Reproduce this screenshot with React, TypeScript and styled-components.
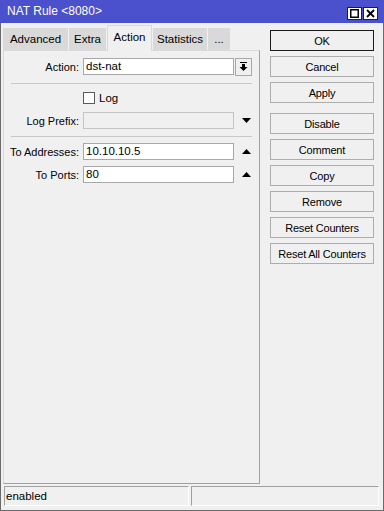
import React from 'react';
import styled, { createGlobalStyle } from 'styled-components';

const GlobalStyle = createGlobalStyle`
  html, body {
    margin: 0;
    padding: 0;
    background: #f0f0f0;
  }
  body {
    font-family: 'Liberation Sans', Arial, sans-serif;
    font-size: 11px;
    color: #000;
  }
  * {
    box-sizing: border-box;
  }
`;

const Window = styled.div`
  width: 384px;
  height: 511px;
  display: flex;
  flex-direction: column;
  background: #f0f0f0;
`;

const TitleBar = styled.div`
  height: 23px;
  flex: none;
  background: #4b50cc;
  display: flex;
  align-items: center;
  padding: 0 6px 0 7px;
`;

const Title = styled.div`
  flex: 1;
  color: #fff;
  font-size: 12px;
  line-height: 23px;
`;

const TitleButtons = styled.div`
  display: flex;
  gap: 1px;
  margin-top: 3px;
`;

const TitleButton = styled.div`
  width: 15px;
  height: 13px;
  background: #fff;
  border: 1px solid #202020;
  display: flex;
  align-items: center;
  justify-content: center;
`;

const Body = styled.div`
  flex: 1;
  display: flex;
  flex-direction: column;
  border: 1px solid #6a6a6a;
  border-top: none;
  padding: 0 4px 3px 2px;
`;

const Main = styled.div`
  height: 461px;
  display: flex;
`;

const LeftCol = styled.div`
  width: 257px;
  display: flex;
  flex-direction: column;
`;

const TabRow = styled.div`
  height: 27px;
  display: flex;
  align-items: flex-end;
  gap: 1px;
  position: relative;
  z-index: 1;
`;

const Tab = styled.div<{ $w: number; $active?: boolean }>`
  width: ${(p) => p.$w}px;
  height: ${(p) => (p.$active ? 26 : 22)}px;
  margin-bottom: ${(p) => (p.$active ? -1 : 0)}px;
  background: ${(p) => (p.$active ? '#f0f0f0' : '#d9d9d9')};
  border: ${(p) => (p.$active ? '1px solid #d9d9d9' : 'none')};
  border-bottom: none;
  display: flex;
  align-items: center;
  justify-content: center;
  font-size: 11.5px;
  padding-bottom: ${(p) => (p.$active ? 4 : 0)}px;
`;

const Panel = styled.div`
  flex: 1;
  border: 1px solid #d9d9d9;
  border-right-color: #a0a0a0;
  border-bottom-color: #a0a0a0;
  padding-top: 7px;
  display: flex;
  flex-direction: column;
`;

const Row = styled.div<{ $mt?: number }>`
  height: 17px;
  margin-top: ${(p) => p.$mt ?? 0}px;
  display: flex;
  align-items: center;
`;

const Label = styled.div`
  width: 75px;
  text-align: right;
  margin-right: 4px;
  white-space: nowrap;
`;

const Input = styled.div<{ $disabled?: boolean }>`
  width: 151px;
  height: 17px;
  border: 1px solid ${(p) => (p.$disabled ? '#c4c4c4' : '#a8a8a8')};
  background: ${(p) => (p.$disabled ? '#f0f0f0' : '#fff')};
  padding-left: 2px;
  line-height: 15px;
  font-size: 11.5px;
  overflow: hidden;
`;

const DropButton = styled.div`
  width: 17px;
  height: 18px;
  margin-left: 1px;
  border: 1px solid #a8a8a8;
  background: #f0f0f0;
  display: flex;
  align-items: center;
  justify-content: center;
`;

const Arrow = styled.div`
  width: 17px;
  margin-left: 4px;
  display: flex;
  align-items: center;
  justify-content: center;
`;

const Separator = styled.div<{ $mt: number }>`
  height: 1px;
  background: #c8c8c8;
  margin: ${(p) => p.$mt}px 7px 0 7px;
`;

const CheckRow = styled.div<{ $mt?: number }>`
  height: 17px;
  margin-top: ${(p) => p.$mt ?? 0}px;
  padding-left: 79px;
  display: flex;
  align-items: center;
  gap: 4px;
  font-size: 11.5px;
`;

const CheckBox = styled.div`
  width: 12px;
  height: 12px;
  background: #fff;
  border: 1px solid #5a5a5a;
`;

const RightCol = styled.div`
  width: 104px;
  margin-left: 10px;
  padding-top: 7px;
  display: flex;
  flex-direction: column;
`;

const Button = styled.div<{ $default?: boolean; $mt?: number }>`
  height: 21px;
  margin-top: ${(p) => p.$mt ?? 0}px;
  border: 1px solid ${(p) => (p.$default ? '#1a1a1a' : '#adadad')};
  background: #f0f0f0;
  display: flex;
  align-items: center;
  justify-content: center;
  letter-spacing: -0.2px;
`;

const StatusBar = styled.div`
  margin-top: 2px;
  height: 20px;
  margin-left: 1px;
  display: flex;
  gap: 2px;
`;

const StatusCell = styled.div<{ $w?: number }>`
  width: ${(p) => (p.$w ? `${p.$w}px` : 'auto')};
  flex: ${(p) => (p.$w ? 'none' : 1)};
  border-top: 1px solid #a0a0a0;
  border-left: 1px solid #a0a0a0;
  border-right: 1px solid #fff;
  border-bottom: 1px solid #fff;
  padding-left: 1px;
  line-height: 18px;
  font-size: 11.5px;
`;

const DownBarIcon = () => (
  <svg width="9" height="9" viewBox="0 0 9 9">
    <rect x="1" y="0" width="7" height="1" fill="#000" />
    <rect x="3" y="2" width="3" height="3" fill="#000" />
    <polygon points="0.5,5 8.5,5 4.5,9" fill="#000" />
  </svg>
);

const Triangle = ({ up }: { up?: boolean }) => (
  <svg width="9" height="5" viewBox="0 0 9 5">
    <polygon points={up ? '0,5 9,5 4.5,0' : '0,0 9,0 4.5,5'} fill="#000" />
  </svg>
);

const tabs = [
  { name: 'Advanced', w: 65 },
  { name: 'Extra', w: 37 },
  { name: 'Action', w: 45, active: true },
  { name: 'Statistics', w: 54 },
  { name: '...', w: 22 },
];

const buttons = [
  { name: 'OK', def: true },
  { name: 'Cancel' },
  { name: 'Apply' },
  { name: 'Disable', gap: 10 },
  { name: 'Comment' },
  { name: 'Copy' },
  { name: 'Remove' },
  { name: 'Reset Counters' },
  { name: 'Reset All Counters' },
];

export default function App() {
  return (
    <>
      <GlobalStyle />
      <Window>
        <TitleBar>
          <Title>NAT Rule &lt;8080&gt;</Title>
          <TitleButtons>
            <TitleButton>
              <svg width="9" height="9" viewBox="0 0 9 9">
                <rect x="0.75" y="0.75" width="7.5" height="7.5" fill="none" stroke="#000" strokeWidth="1.5" />
              </svg>
            </TitleButton>
            <TitleButton>
              <svg width="9" height="9" viewBox="0 0 9 9">
                <path d="M1 1 L8 8 M8 1 L1 8" stroke="#000" strokeWidth="1.8" />
              </svg>
            </TitleButton>
          </TitleButtons>
        </TitleBar>
        <Body>
          <Main>
            <LeftCol>
              <TabRow>
                {tabs.map((t) => (
                  <Tab key={t.name} $w={t.w} $active={t.active}>
                    {t.name}
                  </Tab>
                ))}
              </TabRow>
              <Panel>
                <Row>
                  <Label>Action:</Label>
                  <Input>dst-nat</Input>
                  <DropButton>
                    <DownBarIcon />
                  </DropButton>
                </Row>
                <Separator $mt={8} />
                <CheckRow $mt={5}>
                  <CheckBox />
                  <span>Log</span>
                </CheckRow>
                <Row $mt={6}>
                  <Label>Log Prefix:</Label>
                  <Input $disabled />
                  <Arrow>
                    <Triangle />
                  </Arrow>
                </Row>
                <Separator $mt={7} />
                <Row $mt={6}>
                  <Label>To Addresses:</Label>
                  <Input>10.10.10.5</Input>
                  <Arrow>
                    <Triangle up />
                  </Arrow>
                </Row>
                <Row $mt={6}>
                  <Label>To Ports:</Label>
                  <Input>80</Input>
                  <Arrow>
                    <Triangle up />
                  </Arrow>
                </Row>
              </Panel>
            </LeftCol>
            <RightCol>
              {buttons.map((b, i) => (
                <Button key={b.name} $default={b.def} $mt={i === 0 ? 0 : b.gap ?? 5}>
                  {b.name}
                </Button>
              ))}
            </RightCol>
          </Main>
          <StatusBar>
            <StatusCell $w={185}>enabled</StatusCell>
            <StatusCell />
          </StatusBar>
        </Body>
      </Window>
    </>
  );
}
